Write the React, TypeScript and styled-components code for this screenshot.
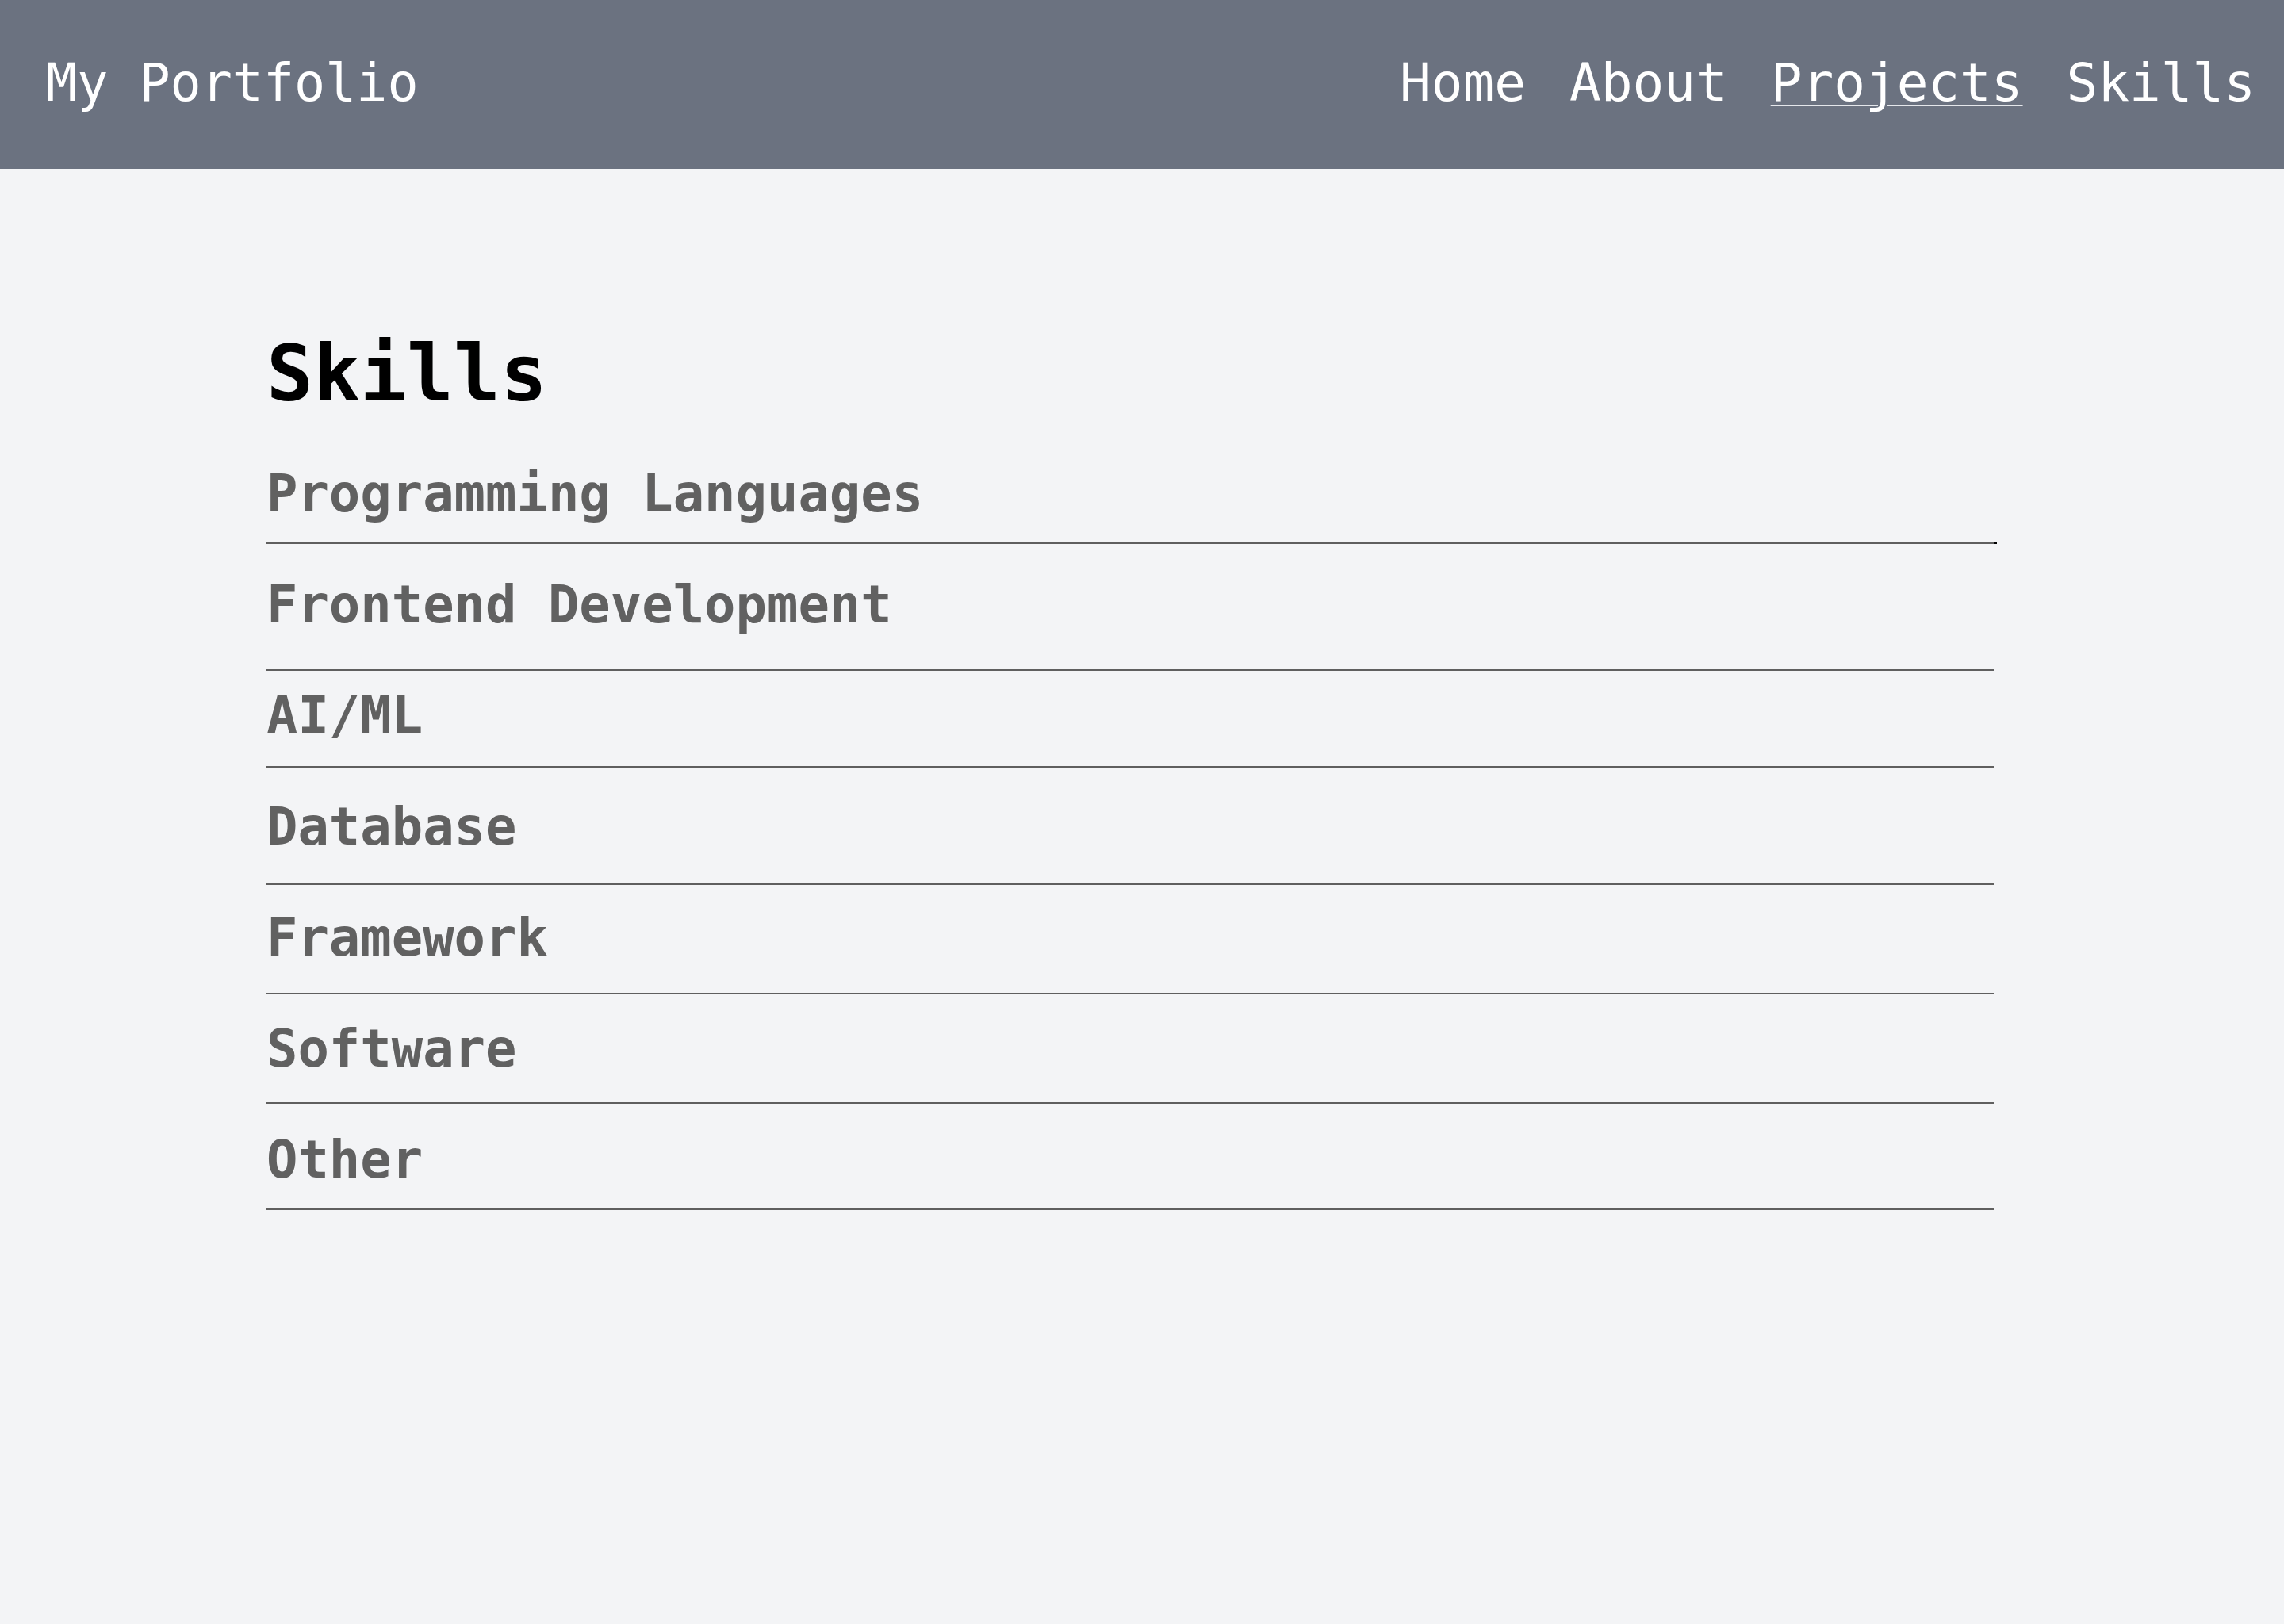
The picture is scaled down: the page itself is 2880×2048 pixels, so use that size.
import React from "react";
import styled, { createGlobalStyle } from "styled-components";

const GlobalStyle = createGlobalStyle`
  html, body {
    margin: 0;
    padding: 0;
    background: #f3f4f6;
    font-family: "DejaVu Sans Mono", "Liberation Mono", monospace;
  }
  #root {
    min-height: 2048px;
    background: #f3f4f6;
  }
`;

const Header = styled.header`
  height: 213px;
  box-sizing: border-box;
  background: #6b7280;
  display: flex;
  align-items: center;
  justify-content: space-between;
  padding: 0 36px 0 58px;
`;

const Brand = styled.div`
  color: #ffffff;
  font-size: 65px;
  line-height: 65px;
  margin-top: -4px;
`;

const Nav = styled.nav`
  display: flex;
  gap: 55px;
  margin-top: -4px;
`;

const NavLink = styled.a<{ $active?: boolean }>`
  color: #ffffff;
  font-size: 66px;
  line-height: 66px;
  text-decoration: ${(p) => (p.$active ? "underline" : "none")};
  text-decoration-thickness: 2px;
  text-underline-offset: 5px;
  text-decoration-color: #e5e7eb;
  cursor: pointer;
`;

const Main = styled.main`
  padding: 208px 0 0 336px;
  width: 2178px;
`;

const Title = styled.h1`
  margin: 0 0 69px 0;
  font-size: 98px;
  line-height: 100px;
  font-weight: 700;
  color: #000000;
`;

const List = styled.div`
  display: flex;
  flex-direction: column;
`;

const Row = styled.div`
  height: 140px;
  display: flex;
  flex-direction: column;
`;

const Label = styled.div`
  font-size: 65.5px;
  line-height: 65px;
  font-weight: 700;
  color: #616161;
`;

const Divider = styled.div<{ $offset: number; $tail?: boolean }>`
  margin-top: ${(p) => p.$offset}px;
  height: 2px;
  background: #5f5f5f;
  position: relative;
  &::after {
    content: "";
    display: ${(p) => (p.$tail ? "block" : "none")};
    position: absolute;
    right: -4px;
    top: 0;
    width: 4px;
    height: 2px;
    background: #000;
  }
`;

const skills: { name: string; offset: number }[] = [
  { name: "Programming Languages", offset: 29 },
  { name: "Frontend Development", offset: 49 },
  { name: "AI/ML", offset: 31 },
  { name: "Database", offset: 39 },
  { name: "Framework", offset: 37 },
  { name: "Software", offset: 35 },
  { name: "Other", offset: 29 },
];

export default function App() {
  return (
    <>
      <GlobalStyle />
      <Header>
        <Brand>My Portfolio</Brand>
        <Nav>
          <NavLink>Home</NavLink>
          <NavLink>About</NavLink>
          <NavLink $active>Projects</NavLink>
          <NavLink>Skills</NavLink>
        </Nav>
      </Header>
      <Main>
        <Title>Skills</Title>
        <List>
          {skills.map((s, i) => (
            <Row key={s.name}>
              <Label>{s.name}</Label>
              <Divider $offset={s.offset} $tail={i === 0} />
            </Row>
          ))}
        </List>
      </Main>
    </>
  );
}
